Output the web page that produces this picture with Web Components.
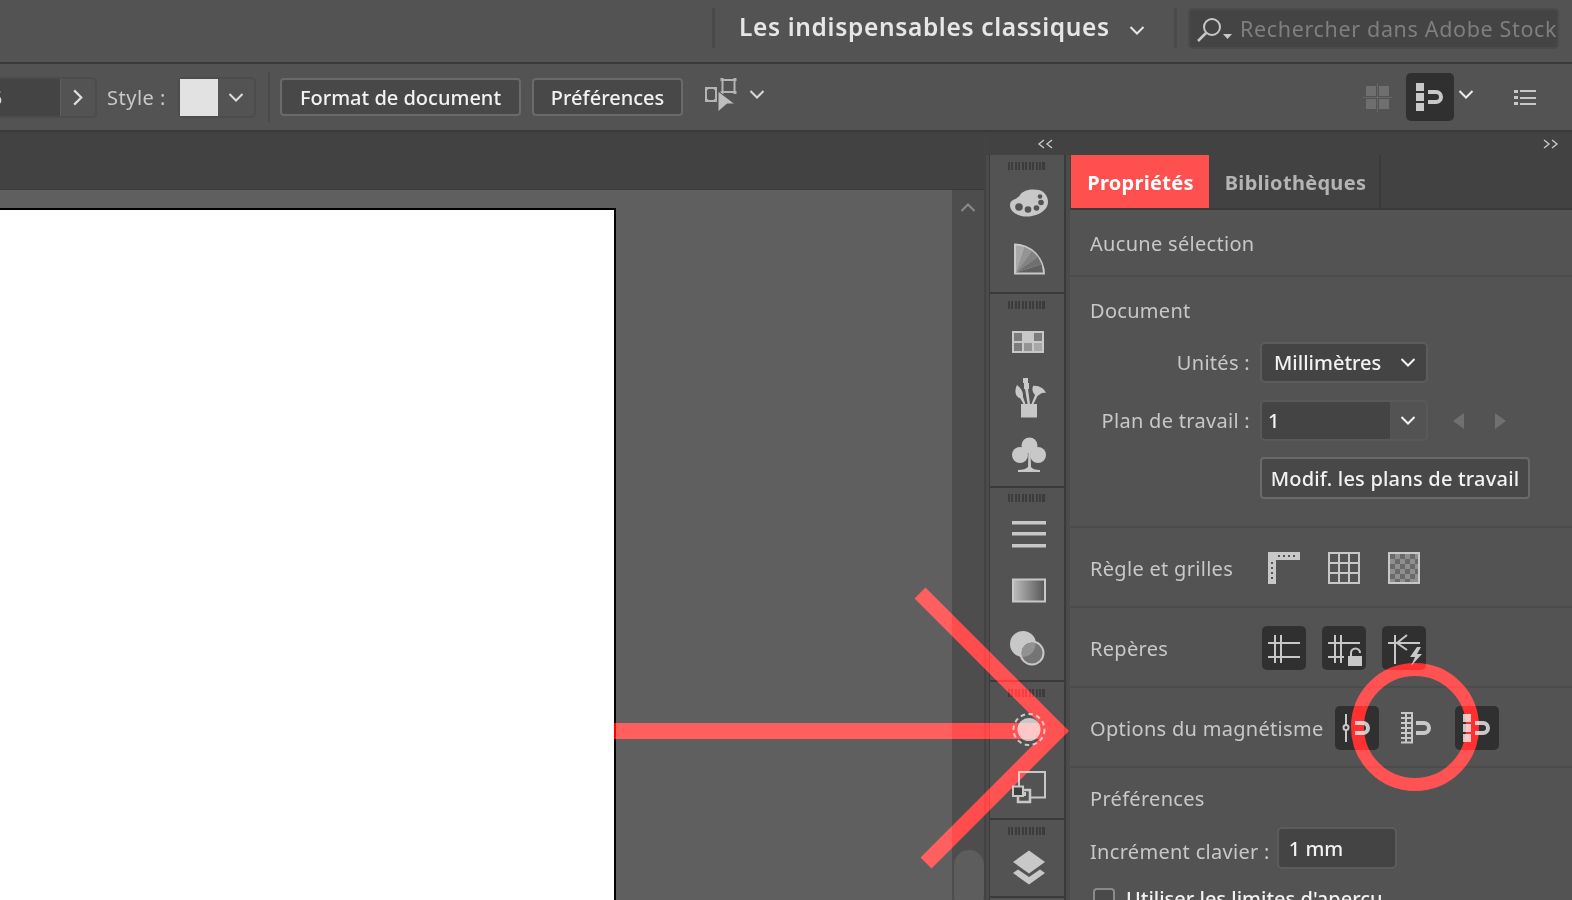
<!DOCTYPE html>
<html lang="fr">
<head>
<meta charset="utf-8">
<title>Propriétés</title>
<style>
html, body { margin: 0; height: 900px; overflow: hidden; background: #535353; }
body { font-family: "Noto Sans", "Open Sans", sans-serif; font-size: 20px; letter-spacing: .3px; color: #c8c8c8; position: relative; }
</style>
</head>
<body>
<ai-topbar></ai-topbar>
<ai-controlbar></ai-controlbar>
<ai-main>
  <ai-doc slot="doc"></ai-doc>
  <ai-dock slot="dock"></ai-dock>
  <ai-panel slot="panel"></ai-panel>
</ai-main>
<ai-callout></ai-callout>

<script>
// icon artwork, keyed by name. c = icon grey, b = panel background
const c = '#c8c8c8', b = '#535353';
const ICONS = {
  chev: `<path d="M.5 1l6.500 6.500L13.500 1" fill="none" stroke="currentColor" stroke-width="2"/>`,
  dbl: `<path d="M6 2L1 6l5 4M14 2L9 6l5 4" fill="none" stroke="currentColor" stroke-width="1.4"/>`,
  palette: `<path d="M5 24C5 18 12 19 15 14C18 9 27 7.5 34 9C40 10.5 43 16 43 21C43 29 33 35.5 22 35.5C13 35.5 5 31 5 24Z" fill="${c}"/>
    <g fill="${b}"><circle cx="14" cy="26" r="3.8"/><circle cx="23" cy="28.5" r="3.3"/><circle cx="31.5" cy="27" r="2.8"/><circle cx="36" cy="21.5" r="2.8"/><circle cx="35" cy="15.5" r="2.3"/></g>`,
  wedge: `<path d="M9 5.500A31 31 0 0 1 40 36.5H9Z" fill="${c}"/>
    <path d="M11 34.5V7.5L19.3 8.8Z" fill="#a8a8a8"/><path d="M11 34.5L19.3 8.800L26.9 12.7Z" fill="#949494"/>
    <path d="M11 34.5L26.9 12.700L32.8 18.6Z" fill="#828282"/><path d="M11 34.5L32.8 18.6L36.7 26.2Z" fill="#707070"/>
    <path d="M11 34.5L36.7 26.2L38 34.5Z" fill="#5f5f5f"/>`,
  swatches: `<rect x="7" y="11" width="32" height="22" fill="${c}"/>
    <g fill="#7c7c7c"><rect x="9" y="13" width="8" height="8"/><rect x="29" y="13" width="8" height="8"/><rect x="9" y="23" width="8" height="8"/></g>
    <rect x="19" y="23" width="8" height="8" fill="#949494"/><rect x="29" y="23" width="8" height="8" fill="#a8a8a8"/>`,
  brushes: `<rect x="16" y="27" width="16" height="13.5" fill="${c}"/>
    <path d="M12 8C16 11 18.500 15 18 20L20.500 27H18.500L15 21C10.500 20 9 14 12 8Z" fill="${c}"/>
    <path d="M18 1H23V6H24V12H23L25 27H22.500L20 12H19V6H18Z" fill="${c}"/>
    <path d="M28 9C33 8 39 11 41 16C38 15 36 16 32.500 19L28.500 27H26.500L30 18C27 15 27 12 28 9Z" fill="${c}"/>`,
  club: `<g fill="${c}"><circle cx="24.500" cy="11.500" r="8"/><circle cx="15" cy="21" r="8"/><circle cx="33" cy="21" r="8"/>
    <path d="M23.500 16H25.500L26 33Q28 36 35 36V38H13V36Q20 36 23 33Z"/></g>`,
  lines: `<g fill="${c}"><rect x="7" y="8" width="34" height="3.5"/><rect x="7" y="19" width="34" height="3.5"/><rect x="7" y="31" width="34" height="3.5"/></g>`,
  gradient: `<defs><linearGradient id="g"><stop offset="0" stop-color="#bdbdbd"/><stop offset="1" stop-color="#555"/></linearGradient></defs>
    <rect x="8" y="9.5" width="32" height="22" fill="url(#g)" stroke="${c}" stroke-width="2"/>`,
  transparency: `<circle cx="18" cy="17" r="13" fill="${c}"/><circle cx="27" cy="26" r="11.5" fill="#757575" stroke="${c}" stroke-width="2"/>
    <path d="M16.5 25.5A11 11 0 0 1 30.5 16A13 13 0 0 1 17 30Z" fill="#929292"/>`,
  appearance: `<circle cx="24" cy="21.5" r="15.5" fill="none" stroke="${c}" stroke-width="2" stroke-dasharray="4.5 3.5"/><circle cx="24" cy="21.5" r="11.5" fill="${c}"/>`,
  transform: `<rect x="14" y="7" width="26" height="25.5" fill="none" stroke="${c}" stroke-width="2"/>
    <rect x="13" y="25" width="12" height="12" fill="${b}" stroke="${c}" stroke-width="2.5"/><rect x="17" y="27" width="4" height="4" fill="${c}"/>
    <rect x="8" y="21.5" width="10" height="9.5" fill="#3f3f3f" stroke="${c}" stroke-width="2"/>`,
  layers: `<path d="M24 4.500L40 16L24 27.500L8 16Z" fill="${c}"/><path d="M8 27L13 23.5L24 31L35 23.5L40 27L24 38.5Z" fill="${c}"/>`,
  ruler: `<path fill="${c}" d="M0 0H32V8H8V32H0Z"/><g fill="#535353"><rect x="10" y="3" width="2" height="2"/><rect x="15" y="3" width="2" height="2"/><rect x="20" y="3" width="2" height="2"/><rect x="25" y="3" width="2" height="2"/><rect x="3" y="10" width="2" height="2"/><rect x="3" y="15" width="2" height="2"/><rect x="3" y="20" width="2" height="2"/><rect x="3" y="25" width="2" height="2"/></g>`,
  grid: `<path fill="none" stroke="${c}" stroke-width="2" d="M1 1H31V31H1ZM11 1V31M21 1V31M1 11H31M1 21H31"/>`,
  checker: `<rect x="1" y="1" width="30" height="30" fill="#8f8f8f" stroke="${c}" stroke-width="2"/>
    <path fill="#6a6a6a" d="M2 2H7V7H2ZM12 2H17V7H12ZM22 2H27V7H22ZM7 7H12V12H7ZM17 7H22V12H17ZM27 7H30V12H27ZM2 12H7V17H2ZM12 12H17V17H12ZM22 12H27V17H22ZM7 17H12V22H7ZM17 17H22V22H17ZM27 17H30V22H27ZM2 22H7V27H2ZM12 22H17V27H12ZM22 22H27V27H22ZM7 27H12V30H7ZM17 27H22V30H17Z"/>`,
  guides: `<path fill="none" stroke="${c}" stroke-width="2" d="M13 9V37M19 9V37M6 17H38M6 31H38"/>`,
  guidesLock: `<path fill="none" stroke="${c}" stroke-width="2" d="M13 9V37M19 9V37M6 17H38M6 31H22"/>
    <rect x="26" y="30" width="14" height="10" fill="${c}"/><path d="M29 30V27A4.5 4.5 0 0 1 38 27" fill="none" stroke="${c}" stroke-width="2"/>`,
  guidesSmart: `<path fill="none" stroke="${c}" stroke-width="2" d="M13 9V38M6 17H38M25 9L15 17L25 24"/>
    <path d="M35 21L28 31H33L29 40L40 28H35L39 21Z" fill="${c}"/>`,
  snapPoint: `<path fill="none" stroke="${c}" stroke-width="2" d="M11 8V36"/><circle cx="11" cy="21.5" r="2.5" fill="#303030" stroke="${c}" stroke-width="2"/>
    <rect x="20" y="15" width="5" height="4" fill="${c}"/><rect x="20" y="25" width="5" height="4" fill="${c}"/><path d="M25 17H28A5 5 0 0 1 28 27H25" fill="none" stroke="${c}" stroke-width="4"/>`,
  snapPixel: `<path fill="none" stroke="${c}" stroke-width="2" d="M11 6V37M17 6V37M6 7H18M6 12H18M6 17H18M6 22H18M6 27H18M6 32H18M6 36.500H18"/>
    <rect x="21" y="15" width="5" height="4" fill="${c}"/><rect x="21" y="25" width="5" height="4" fill="${c}"/><path d="M26 17H29A5 5 0 0 1 29 27H26" fill="none" stroke="${c}" stroke-width="4"/>`,
  snapGrid: `<g fill="${c}"><rect x="8" y="8" width="8" height="8"/><rect x="8" y="18" width="8" height="8"/><rect x="8" y="28" width="8" height="8"/>
    <rect x="20" y="15" width="5" height="4"/><rect x="20" y="25" width="5" height="4"/></g><path d="M25 17H28A5 5 0 0 1 28 27H25" fill="none" stroke="${c}" stroke-width="4"/>`,
  search: `<circle cx="22" cy="14" r="8" fill="none" stroke="currentColor" stroke-width="2"/><path d="M16 20L8 28" stroke="currentColor" stroke-width="2.5"/><path d="M33 21H42L37.5 26Z" fill="currentColor"/>`,
  select: `<g fill="none" stroke="#b4b4b4" stroke-width="2"><rect x="18.5" y="3" width="12" height="12"/><rect x="2" y="11" width="10" height="13"/></g>
    <g fill="#b4b4b4"><rect x="16.5" y="1" width="3" height="3"/><rect x="29.5" y="1" width="3" height="3"/><rect x="16.5" y="14" width="3" height="3"/><rect x="29.5" y="14" width="3" height="3"/><rect x="1" y="10" width="3" height="3"/><rect x="10" y="10" width="3" height="3"/><rect x="1" y="22" width="3" height="3"/><rect x="10" y="22" width="3" height="3"/></g>
    <path d="M14 14L31 27H23L14 35Z" fill="#bdbdbd" stroke="#535353"/>`,
  align: `<g fill="#6f6f6f"><rect x="3" y="3" width="10" height="10"/><rect x="16" y="3" width="10" height="10"/><rect x="3" y="16" width="10" height="10"/><rect x="16" y="16" width="10" height="10"/></g><path d="M14.5 0V29M0 14.5H29" stroke="#666" stroke-width="1"/>`,
  list: `<g fill="#c8c8c8"><rect x="0" y="1" width="4" height="3"/><rect x="0" y="7" width="4" height="3"/><rect x="0" y="13" width="4" height="3"/><rect x="6" y="1" width="16" height="2"/><rect x="6" y="8" width="16" height="2"/><rect x="6" y="14" width="16" height="2"/></g>`,
};

function define(tag, css, html) {
  customElements.define(tag, class extends HTMLElement {
    constructor() {
      super();
      this.attachShadow({ mode: 'open' });
      this.shadowRoot.innerHTML = `<style>${css}</style>${html}`;
    }
  });
}

class AiIcon extends HTMLElement {
  constructor() {
    super();
    this.attachShadow({ mode: 'open' });
  }
  connectedCallback() {
    const w = this.getAttribute('w') || 44, h = this.getAttribute('h') || w;
    this.shadowRoot.innerHTML = `<style>:host{display:block;width:${w}px;height:${h}px;flex:none}svg{display:block;overflow:visible}</style>
      <svg width="${w}" height="${h}" viewBox="0 0 ${w} ${h}">${ICONS[this.getAttribute('name')] || ''}</svg>`;
  }
}
customElements.define('ai-icon', AiIcon);

class AiTool extends HTMLElement {
  constructor() {
    super();
    this.attachShadow({ mode: 'open' });
  }
  connectedCallback() {
    this.shadowRoot.innerHTML = `<style>:host{display:flex;align-items:center;justify-content:center;height:57px}</style>
      <ai-icon name="${this.getAttribute('name')}"></ai-icon>`;
  }
}
customElements.define('ai-tool', AiTool);

define('ai-topbar', `
  :host { display: flex; align-items: flex-start; height: 54px; padding: 8px 0 0 712px; border-bottom: 2px solid #3a3a3a; background: #535353; }
  .sep { width: 3px; height: 40px; background: #4a4a4a; }
  .title { font-weight: 600; font-size: 24.5px; letter-spacing: .65px; line-height: 38px; color: #e6e6e6; margin-left: 24px; width: 371px; white-space: nowrap; }
  .chev { color: #e6e6e6; margin: 18px 0 0 20px; }
  .sep2 { margin-left: 30px; }
  .search { margin-left: 11px; width: 371px; height: 41px; box-sizing: border-box; background: #444; border: 2px solid #4b4b4b; border-radius: 5px; display: flex; align-items: center; color: #7f7f7f; font-size: 21.5px; letter-spacing: .65px; white-space: nowrap; overflow: hidden; }
  .search ai-icon { color: #c8c8c8; margin: 0 6px 0 0; }
`, `<div class="sep"></div><div class="title">Les indispensables classiques</div>
    <ai-icon class="chev" name="chev" w="14" h="9"></ai-icon><div class="sep sep2"></div>
    <div class="search"><ai-icon name="search" w="44" h="32"></ai-icon><span>Rechercher dans Adobe Stock</span></div>`);

define('ai-button', `
  :host { display: inline-flex; align-items: center; justify-content: center; box-sizing: border-box; height: 38px; border: 2px solid #6a6a6a; border-radius: 4px; color: #f2f2f2; background: #484848; white-space: nowrap; font-size: 20px; font-weight: 500; letter-spacing: 0; }
`, `<slot></slot>`);

define('ai-controlbar', `
  :host { display: flex; align-items: center; height: 66px; border-bottom: 2px solid #3a3a3a; background: #535353; }
  .field { display: flex; height: 41px; box-sizing: border-box; border: 2px solid #4c4c4c; border-left: 0; border-radius: 0 5px 5px 0; width: 97px; overflow: hidden; }
  .num { width: 60px; background: #444; color: #ddd; border-right: 1px solid #5f5f5f; overflow: hidden; line-height: 37px; text-indent: -9px; }
  .step { flex: 1; display: flex; align-items: center; justify-content: center; color: #ddd; }
  .step ai-icon { transform: rotate(-90deg) scale(1.1); }
  .lab { margin-left: 10px; width: 71px; white-space: nowrap; letter-spacing: .5px; color: #c8c8c8; }
  .style { display: flex; height: 41px; width: 78px; box-sizing: border-box; border: 2px solid #4c4c4c; border-radius: 5px; }
  .swatch { width: 38px; background: #e2e2e2; }
  .dd { flex: 1; display: flex; align-items: center; justify-content: center; color: #ddd; }
  .sep { width: 2px; height: 50px; background: #4a4a4a; margin: 0 10px 0 12px; }
  ai-button { width: 241px; }
  ai-button.p { width: 151px; margin-left: 11px; }
  .sel { margin-left: 21px; margin-top: -4px; }
  .selc { margin-left: 12px; color: #d8d8d8; margin-top: -5px; }
  .right { margin-left: auto; display: flex; align-items: center; padding-right: 36px; }
  .active { width: 48px; height: 48px; background: #303030; border-radius: 5px; margin-left: 14px; display: flex; align-items: center; justify-content: center; }
  .c2 { color: #ececec; margin: -5px 0 0 5px; }
  .l { margin-left: 41px; }
`, `<div class="field"><div class="num">5</div><div class="step"><ai-icon name="chev" w="14" h="9"></ai-icon></div></div>
    <div class="lab">Style :</div>
    <div class="style"><div class="swatch"></div><div class="dd"><ai-icon name="chev" w="14" h="9"></ai-icon></div></div>
    <div class="sep"></div>
    <ai-button>Format de document</ai-button><ai-button class="p">Préférences</ai-button>
    <ai-icon class="sel" name="select" w="34" h="36"></ai-icon><ai-icon class="selc" name="chev" w="14" h="9"></ai-icon>
    <div class="right">
      <ai-icon name="align" w="29" h="29"></ai-icon>
      <div class="active"><ai-icon name="snapGrid"></ai-icon></div>
      <ai-icon class="c2" name="chev" w="14" h="9"></ai-icon>
      <ai-icon class="l" name="list" w="22" h="17"></ai-icon>
    </div>`);

define('ai-main', `
  :host { display: flex; height: 768px; overflow: hidden; }
  ::slotted([slot=doc]) { width: 984px; flex: none; }
  ::slotted([slot=panel]) { flex: 1; min-width: 0; }
`, `<slot name="doc"></slot><slot name="dock"></slot><slot name="panel"></slot>`);

define('ai-doc', `
  :host { display: flex; flex-direction: column; height: 768px; }
  .tabs { height: 57px; flex: none; background: #424242; border-bottom: 1px solid #3a3a3a; }
  .canvas { flex: 1; min-height: 0; display: flex; background: #5f5f5f; overflow: hidden; }
  .board { width: 616px; flex: none; box-sizing: border-box; margin-top: 18px; background: #fff; border-top: 2px solid #000; border-right: 2px solid #000; }
  .bar { margin-left: auto; width: 32px; background: #4d4d4d; position: relative; display: flex; flex-direction: column; align-items: center; }
  .up { color: #8a8a8a; margin-top: 13px; transform: rotate(180deg); }
  .thumb { position: absolute; left: 2px; right: 0; bottom: -10px; height: 60px; border-radius: 15px; background: #5d5d5d; }
`, `<div class="tabs"></div><div class="canvas"><div class="board"></div><div class="bar"><ai-icon class="up" name="chev" w="14" h="9"></ai-icon><div class="thumb"></div></div></div>`);

define('ai-toolgroup', `
  :host { display: block; padding-top: 7px; border-bottom: 2px solid #3a3a3a; box-sizing: border-box; }
  .grip { height: 8px; margin: 0 0 4px 18px; width: 38px; background: repeating-linear-gradient(90deg, #3c3c3c 0 2px, transparent 2px 3.45px); }
  .tools { display: flex; flex-direction: column; }
`, `<div class="grip"></div><div class="tools"><slot></slot></div>`);

define('ai-dock', `
  :host { display: flex; width: 86px; flex: none; background: #4b4b4b; height: 768px; }
  .edge { width: 2px; background: #434343; flex: none; }
  .col { margin-left: 3px; flex: none; width: 74px; border-left: 1px solid #3a3a3a; border-right: 2px solid #3a3a3a; background: #535353; }
  .head { height: 23px; margin: 0 -6px 0 -4px; background: #424242; color: #c8c8c8; display: flex; justify-content: flex-end; align-items: center; padding-right: 16px; }
  ai-toolgroup.h1 { height: 139px; }
  ai-toolgroup.h2 { height: 194px; }
  ai-toolgroup.h3 { height: 194px; padding-top: 6px; }
  ai-toolgroup.h4 { height: 138px; }
`, `<div class="edge"></div><div class="col">
    <div class="head"><ai-icon name="dbl" w="16" h="12"></ai-icon></div>
    <ai-toolgroup class="h1"><ai-tool name="palette"></ai-tool><ai-tool name="wedge"></ai-tool></ai-toolgroup>
    <ai-toolgroup class="h2"><ai-tool name="swatches"></ai-tool><ai-tool name="brushes"></ai-tool><ai-tool name="club"></ai-tool></ai-toolgroup>
    <ai-toolgroup class="h3"><ai-tool name="lines"></ai-tool><ai-tool name="gradient"></ai-tool><ai-tool name="transparency"></ai-tool></ai-toolgroup>
    <ai-toolgroup class="h4"><ai-tool name="appearance"></ai-tool><ai-tool name="transform"></ai-tool></ai-toolgroup>
    <ai-toolgroup><ai-tool name="layers"></ai-tool></ai-toolgroup>
  </div>`);

define('ai-panel', `
  :host { display: block; height: 768px; overflow: hidden; background: #535353; color: #c8c8c8; }
  .head { height: 23px; background: #424242; color: #c8c8c8; display: flex; justify-content: flex-end; align-items: center; padding-right: 14px; }
  .head ai-icon { transform: scaleX(-1); }
  .tabs { display: flex; height: 53px; background: #424242; border-bottom: 2px solid #3a3a3a; font-weight: 700; font-size: 20px; letter-spacing: .3px; }
  .tab { display: flex; align-items: center; justify-content: center; white-space: nowrap; padding-top: 2px; box-sizing: border-box; }
  .on { width: 138px; background: #ff5050; color: #fff; margin-left: 1px; padding-left: 1px; }
  .off { width: 172px; color: #b4b4b4; border-right: 2px solid #3a3a3a; padding-left: 3px; }
  section { border-bottom: 2px solid #4b4b4b; padding-left: 20px; box-sizing: border-box; }
  .none { height: 67px; display: flex; align-items: center; padding-top: 2px; }
  .doc { height: 251px; padding-top: 20px; }
  .title { height: 28px; line-height: 28px; }
  .form { display: grid; grid-template-columns: 160px auto 1fr; column-gap: 10px; margin-top: 17px; align-items: center; row-gap: 17px; }
  .lab { text-align: right; white-space: nowrap; }
  .select, .combo, .input { box-sizing: border-box; height: 41px; background: #444; border: 2px solid #5c5c5c; border-radius: 5px; color: #f2f2f2; display: flex; align-items: center; white-space: nowrap; font-weight: 500; letter-spacing: 0; }
  .select { width: 168px; padding-left: 12px; justify-content: space-between; padding-right: 11px; }
  .combo { width: 168px; padding-left: 6px; background: linear-gradient(90deg, #444 128px, #535353 128px); border-color: #595959; }
  .combo ai-icon { margin-left: auto; position: relative; right: 11px; }
  .nav { display: flex; gap: 31px; padding-left: 15px; }
  ai-button.mod { grid-column: 2 / span 2; width: 270px; height: 42px; margin-top: -1px; letter-spacing: .2px; }
  .row { display: flex; align-items: center; height: 80px; padding-top: 2px; }
  .row .name { white-space: nowrap; }
  .dark { width: 44px; height: 44px; border-radius: 5px; background: #303030; flex: none; }
  .plain { width: 44px; height: 44px; flex: none; }
  .btns { display: flex; gap: 16px; }
  .pref { padding-top: 17px; border: 0; }
  .inc { display: flex; align-items: center; margin-top: 14px; gap: 7px; }
  .inc span { padding-top: 6px; white-space: nowrap; }
  .input { width: 120px; height: 42px; padding-left: 10px; }
  .chk { display: flex; align-items: center; gap: 11px; margin: 16px 0 0 3px; white-space: nowrap; color: #f2f2f2; font-weight: 500; letter-spacing: 0; }
  .box { width: 22px; height: 22px; box-sizing: border-box; border: 2px solid #8a8a8a; border-radius: 4px; background: #4a4a4a; }
`, `<div class="head"><ai-icon name="dbl" w="16" h="12"></ai-icon></div>
    <div class="tabs"><div class="tab on">Propriétés</div><div class="tab off">Bibliothèques</div></div>
    <section class="none">Aucune sélection</section>
    <section class="doc">
      <div class="title">Document</div>
      <div class="form">
        <div class="lab">Unités :</div>
        <div class="select">Millimètres<ai-icon name="chev" w="14" h="9"></ai-icon></div><div></div>
        <div class="lab">Plan de travail :</div>
        <div class="combo">1<ai-icon name="chev" w="14" h="9"></ai-icon></div>
        <div class="nav"><svg width="11" height="16"><path d="M11 0V16L0 8Z" fill="#707070"/></svg><svg width="11" height="16"><path d="M0 0V16L11 8Z" fill="#707070"/></svg></div>
        <div></div>
        <ai-button class="mod">Modif. les plans de travail</ai-button>
      </div>
    </section>
    <section class="row"><span class="name" style="width:178px">Règle et grilles</span><div class="btns" style="gap:28px"><ai-icon name="ruler" w="32"></ai-icon><ai-icon name="grid" w="32"></ai-icon><ai-icon name="checker" w="32"></ai-icon></div></section>
    <section class="row"><span class="name" style="width:172px">Repères</span><div class="btns"><div class="dark"><ai-icon name="guides"></ai-icon></div><div class="dark"><ai-icon name="guidesLock"></ai-icon></div><div class="dark"><ai-icon name="guidesSmart"></ai-icon></div></div></section>
    <section class="row"><span class="name" style="width:245px">Options du magnétisme</span><div class="btns"><div class="dark"><ai-icon name="snapPoint"></ai-icon></div><div class="plain"><ai-icon name="snapPixel"></ai-icon></div><div class="dark"><ai-icon name="snapGrid"></ai-icon></div></div></section>
    <section class="pref">
      <div class="title">Préférences</div>
      <div class="inc"><span>Incrément clavier :</span><div class="input">1 mm</div></div>
      <div class="chk"><div class="box"></div>Utiliser les limites d'aperçu</div>
    </section>`);

// the red arrow and ring painted over the screenshot; lighten keeps the grey under them readable
define('ai-callout', `
  :host { position: absolute; left: 0; top: 0; width: 1572px; height: 900px; mix-blend-mode: lighten; pointer-events: none; }
  svg { display: block; }
`, `<svg width="1572" height="900" viewBox="0 0 1572 900" fill="none" stroke="#f00">
    <path d="M614 731H1058" stroke-width="16"/>
    <path d="M920 593L1058 731L926 863" stroke-width="15.5" stroke-miterlimit="4"/>
    <circle cx="1415" cy="727" r="57.5" stroke-width="13"/>
  </svg>`);
</script>
</body>
</html>
